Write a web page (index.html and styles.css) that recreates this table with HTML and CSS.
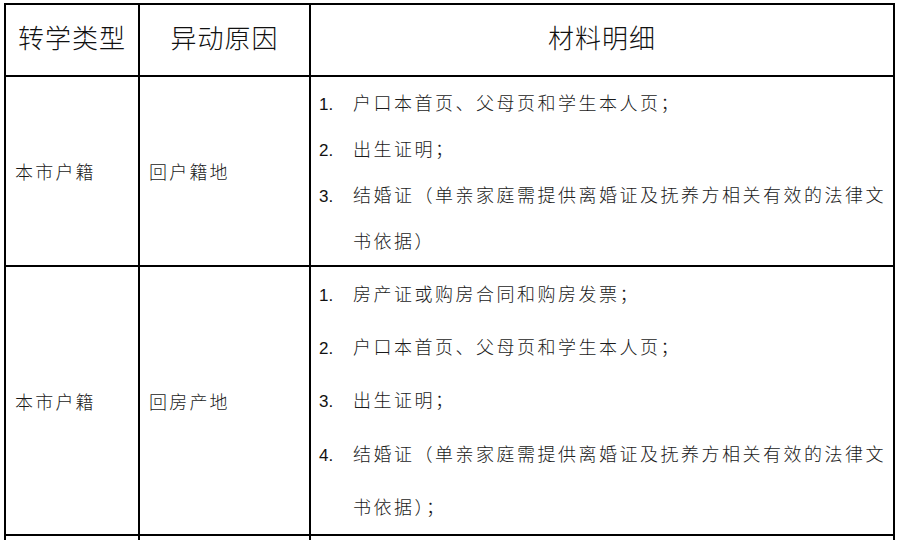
FILE: index.html
```html
<!DOCTYPE html>
<html lang="zh-CN">
<head>
<meta charset="utf-8">
<title>转学材料</title>
<link rel="stylesheet" href="styles.css">
</head>
<body>
<div class="grid">
  <div class="cell head">转学类型</div>
  <div class="cell head">异动原因</div>
  <div class="cell head">材料明细</div>

  <div class="cell plain">本市户籍</div>
  <div class="cell plain">回户籍地</div>
  <div class="cell mat r1">
    <ol class="list">
      <li><span class="num">1.</span>户口本首页、父母页和学生本人页；</li>
      <li><span class="num">2.</span>出生证明；</li>
      <li><span class="num">3.</span>结婚证（单亲家庭需提供离婚证及抚养方相关有效的法律文<br>书依据）</li>
    </ol>
  </div>

  <div class="cell plain">本市户籍</div>
  <div class="cell plain">回房产地</div>
  <div class="cell mat r2">
    <ol class="list">
      <li><span class="num">1.</span>房产证或购房合同和购房发票；</li>
      <li><span class="num">2.</span>户口本首页、父母页和学生本人页；</li>
      <li><span class="num">3.</span>出生证明；</li>
      <li><span class="num">4.</span>结婚证（单亲家庭需提供离婚证及抚养方相关有效的法律文<br>书依据）；</li>
    </ol>
  </div>

  <div class="cell"></div>
  <div class="cell"></div>
  <div class="cell"></div>
</div>
</body>
</html>
```

FILE: styles.css
```css
html, body {
  margin: 0;
  padding: 0;
  background: #fff;
  overflow: hidden;
}

body {
  width: 902px;
  height: 540px;
  color: #111;
  font-family: "Liberation Sans", "Noto Sans CJK SC", sans-serif;
}

.grid {
  margin: 3px 0 0 4px;
  width: 891px;
  box-sizing: border-box;
  display: grid;
  grid-template-columns: 134px 171px 584px;
  grid-template-rows: 72px 190px 269px 40px;
  border-left: 2px solid #000;
  border-top: 2px solid #000;
}

.cell {
  box-sizing: border-box;
  border-right: 2px solid #000;
  border-bottom: 2px solid #000;
}

.head {
  display: flex;
  align-items: center;
  justify-content: center;
  padding-bottom: 8px;
  font-family: "Noto Sans CJK SC", sans-serif;
  font-weight: 300;
  font-size: 26px;
  letter-spacing: 1px;
  color: #111;
}

.plain {
  display: flex;
  align-items: center;
  padding-left: 9px;
  font-family: "Noto Sans CJK SC", sans-serif;
  font-size: 18px;
  letter-spacing: 2.2px;
  font-weight: 300;
  color: #1a1a1a;
}

.mat {
  padding-left: 8px;
  overflow: hidden;
}

.list {
  list-style: none;
  margin: 0;
  padding: 0;
}

.list li {
  padding-left: 34px;
  font-family: "Noto Sans CJK SC", sans-serif;
  font-weight: 300;
  font-size: 18px;
  letter-spacing: 2.5px;
  color: #1a1a1a;
  white-space: nowrap;
}

.num {
  display: inline-block;
  width: 34px;
  margin-left: -34px;
  line-height: 1;
  letter-spacing: 0;
  font-family: "Liberation Sans", sans-serif;
  font-weight: 400;
  font-size: 17px;
  color: #111;
}

.r1 .list {
  padding-top: 2px;
}

.r1 .list li {
  line-height: 46px;
}

.r2 .list li {
  line-height: 53.2px;
}
```
